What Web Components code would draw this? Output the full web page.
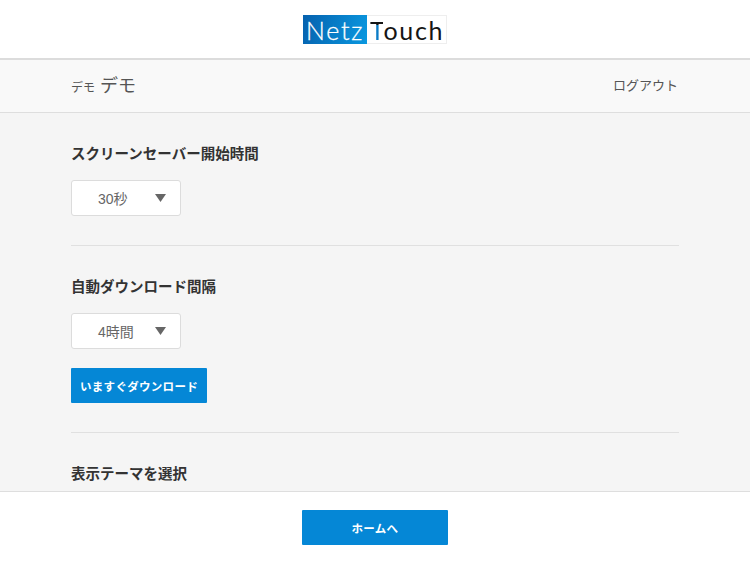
<!DOCTYPE html>
<html lang="ja">
<head>
<meta charset="utf-8">
<title>設定</title>
<style>
    html, body { margin: 0; height: 100%; }
    body {
        font-family: "Liberation Sans", "Noto Sans CJK JP", sans-serif;
        color: #333;
    }
</style>
</head>
<body>
<settings-page>
    <app-header slot="header"></app-header>
    <user-bar slot="user" small="デモ" name="デモ" action="ログアウト"></user-bar>

    <settings-section heading="スクリーンセーバー開始時間">
        <select-box value="30秒"></select-box>
    </settings-section>
    <settings-section heading="自動ダウンロード間隔">
        <select-box value="4時間"></select-box>
        <blue-button class="now">いますぐダウンロード</blue-button>
    </settings-section>
    <settings-section heading="表示テーマを選択" last></settings-section>

    <app-footer slot="footer"></app-footer>
</settings-page>

<script>
class SettingsPage extends HTMLElement {
    connectedCallback() {
        this.attachShadow({ mode: 'open' });
        this.shadowRoot.innerHTML = `
            <style>
                :host {
                    display: flex;
                    flex-direction: column;
                    height: 563px;
                    overflow: hidden;
                    background: #f5f5f5;
                }
                .body {
                    flex: 1;
                    min-height: 0;
                    overflow: hidden;
                    padding: 0 71px 0 71px;
                }
            </style>
            <slot name="header"></slot>
            <slot name="user"></slot>
            <div class="body"><slot></slot></div>
            <slot name="footer"></slot>
        `;
    }
}

class AppHeader extends HTMLElement {
    connectedCallback() {
        this.attachShadow({ mode: 'open' });
        this.shadowRoot.innerHTML = `
            <style>
                :host {
                    display: flex;
                    justify-content: center;
                    align-items: center;
                    height: 58px;
                    background: #fff;
                    border-bottom: 2px solid #dcdcdc;
                }
                .logo {
                    display: flex;
                    height: 29px;
                    font-family: Lato, "Open Sans", sans-serif;
                    font-size: 25px;
                    letter-spacing: 1.7px;
                    line-height: 30px;
                }
                .netz {
                    width: 64px;
                    box-sizing: border-box;
                    padding-left: 3px;
                    color: #fff;
                    font-weight: 300;
                    -webkit-text-stroke: 0.3px #fff;
                    background: linear-gradient(105deg, #0561ae, #0a98e0);
                }
                .touch {
                    width: 80px;
                    box-sizing: border-box;
                    padding-left: 3px;
                    color: #151515;
                    background: #fff;
                    border: 1px solid #eee;
                    border-left: 0;
                    line-height: 28px;
                }
                /* bar of the T is black, stem is blue */
                .t {
                    color: transparent;
                    background: linear-gradient(#151515 0 32%, #0b7cc6 32%);
                    -webkit-background-clip: text;
                    background-clip: text;
                }
            </style>
            <div class="logo">
                <span class="netz">Netz</span>
                <span class="touch"><span class="t">T</span>ouch</span>
            </div>
        `;
    }
}

class UserBar extends HTMLElement {
    connectedCallback() {
        this.attachShadow({ mode: 'open' });
        this.shadowRoot.innerHTML = `
            <style>
                :host {
                    display: flex;
                    align-items: center;
                    justify-content: space-between;
                    height: 49px;
                    padding: 0 72px 3px 71px;
                    background: #f9f9f9;
                    border-bottom: 1px solid #dedede;
                    color: #555;
                }
                .who { display: flex; align-items: baseline; gap: 5px; margin-bottom: 2px; }
                .small { font-size: 12px; }
                .name { font-size: 18px; }
                .action { font-size: 13px; }
            </style>
            <div class="who">
                <span class="small">${this.getAttribute('small')}</span>
                <span class="name">${this.getAttribute('name')}</span>
            </div>
            <span class="action">${this.getAttribute('action')}</span>
        `;
    }
}

class SettingsSection extends HTMLElement {
    connectedCallback() {
        this.attachShadow({ mode: 'open' });
        this.shadowRoot.innerHTML = `
            <style>
                :host {
                    display: block;
                    width: 608px;
                    padding: 31px 0 29px;
                    border-bottom: 1px solid #e0e0e0;
                }
                :host([last]) { border-bottom: 0; }
                h2 {
                    margin: 0;
                    font-size: 14.5px;
                    line-height: 21px;
                    font-weight: 700;
                    color: #333;
                }
                .content { margin-top: 15px; }
                ::slotted(blue-button.now) { margin-top: 19px; }
            </style>
            <h2>${this.getAttribute('heading')}</h2>
            <div class="content"><slot></slot></div>
        `;
    }
}

class SelectBox extends HTMLElement {
    connectedCallback() {
        this.attachShadow({ mode: 'open' });
        this.shadowRoot.innerHTML = `
            <style>
                :host {
                    display: flex;
                    align-items: center;
                    justify-content: space-between;
                    width: 110px;
                    height: 36px;
                    box-sizing: border-box;
                    padding: 0 14px 0 26px;
                    background: #fff;
                    border: 1px solid #dcdcdc;
                    border-radius: 3px;
                    color: #666;
                    font-size: 14px;
                }
                span { margin-bottom: 1px; }
                svg { display: block; }
            </style>
            <span>${this.getAttribute('value')}</span>
            <svg width="11" height="8" viewBox="0 0 11 8"><path d="M0 0h11L5.5 8z" fill="#666"/></svg>
        `;
    }
}

class BlueButton extends HTMLElement {
    connectedCallback() {
        this.attachShadow({ mode: 'open' });
        this.shadowRoot.innerHTML = `
            <style>
                :host {
                    display: flex;
                    align-items: center;
                    justify-content: center;
                    width: 136px;
                    height: 35px;
                    background: #0587d6;
                    border-radius: 1px;
                    color: #fff;
                    font-size: 11.5px;
                    font-weight: 700;
                    letter-spacing: 0.3px;
                }
                :host([wide]) { width: 146px; }
            </style>
            <slot></slot>
        `;
    }
}

class AppFooter extends HTMLElement {
    connectedCallback() {
        this.attachShadow({ mode: 'open' });
        this.shadowRoot.innerHTML = `
            <style>
                :host {
                    display: flex;
                    justify-content: center;
                    align-items: flex-start;
                    height: 72px;
                    box-sizing: border-box;
                    padding-top: 18px;
                    background: #fff;
                    border-top: 1px solid #dedede;
                }
            </style>
            <blue-button wide>ホームへ</blue-button>
        `;
    }
}

customElements.define('settings-page', SettingsPage);
customElements.define('app-header', AppHeader);
customElements.define('user-bar', UserBar);
customElements.define('settings-section', SettingsSection);
customElements.define('select-box', SelectBox);
customElements.define('blue-button', BlueButton);
customElements.define('app-footer', AppFooter);
</script>
</body>
</html>
